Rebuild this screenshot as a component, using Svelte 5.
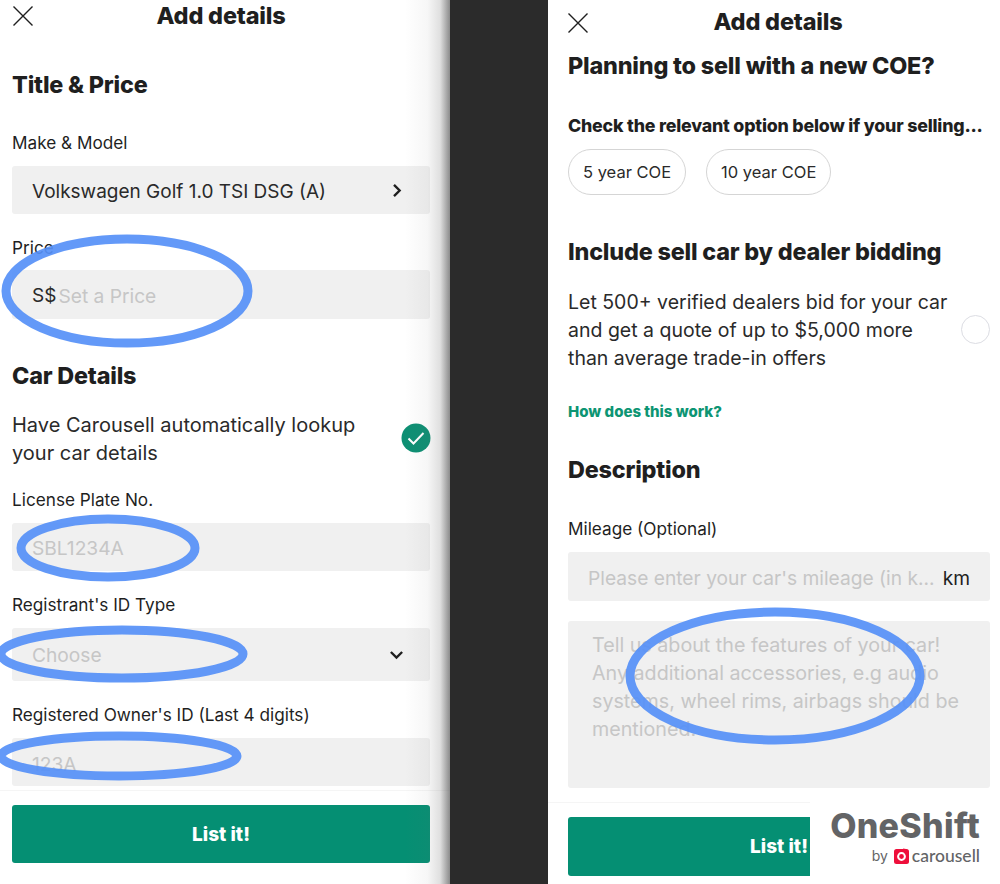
<script>
  const blue = '#5690f7';
</script>

<div class="page">
  <section class="panel left">
    <div class="body">
      <header class="bar">
        <svg class="close" viewBox="0 0 20 20" aria-hidden="true"><path d="M.5.5l19 19M19.5.5l-19 19" /></svg>
        <div class="title">Add details</div>
      </header>

      <h2 class="m36">Title &amp; Price</h2>
      <div class="label m31">Make &amp; Model</div>
      <div class="field m11">
        <span class="value">Volkswagen Golf 1.0 TSI DSG (A)</span>
        <svg class="chev" viewBox="0 0 12 12" aria-hidden="true"><path d="M4 1.5 8.5 6 4 10.5" /></svg>
      </div>

      <div class="label m22">Price</div>
      <div class="field m10 tall49">
        <span class="value">S$</span><span class="hint price">Set a Price</span>
      </div>

      <h2 class="m40">Car Details</h2>
      <div class="lookup m20">
        <p class="copy">Have Carousell automatically lookup<br />your car details</p>
        <svg class="check" viewBox="0 0 30 30" aria-hidden="true">
          <circle cx="15" cy="15" r="14.5" />
          <path d="M7.5 15.5 12.5 20.5 22.5 10" />
        </svg>
      </div>

      <div class="label m21">License Plate No.</div>
      <div class="field m11"><span class="hint">SBL1234A</span></div>

      <div class="label m22">Registrant's ID Type</div>
      <div class="field m11 tall53">
        <span class="hint">Choose</span>
        <svg class="chev" viewBox="0 0 12 12" aria-hidden="true"><path d="M1.5 4 6 8.5 10.5 4" /></svg>
      </div>

      <div class="label m22">Registered Owner's ID (Last 4 digits)</div>
      <div class="field m11"><span class="hint low">123A</span></div>
    </div>

    <footer class="foot"><button class="cta">List it!</button></footer>
    <div class="edge"></div>

    <svg class="marks" viewBox="0 0 450 884" aria-hidden="true">
      <ellipse cx="127" cy="291" rx="121" ry="52" stroke={blue} />
      <ellipse cx="108" cy="548" rx="87" ry="29" stroke={blue} />
      <ellipse cx="122" cy="654" rx="121" ry="24" stroke={blue} />
      <ellipse cx="119" cy="756" rx="118" ry="20" stroke={blue} />
    </svg>
  </section>

  <div class="gutter"></div>

  <section class="panel right">
    <div class="body">
      <header class="bar second">
        <svg class="close" viewBox="0 0 20 20" aria-hidden="true"><path d="M.5.5l19 19M19.5.5l-19 19" /></svg>
        <div class="title">Add details</div>
      </header>

      <h2 class="m11">Planning to sell with a new COE?</h2>
      <div class="strong m32">Check the relevant option below if your selling...</div>
      <div class="pills m12">
        <span class="pill">5 year COE</span>
        <span class="pill">10 year COE</span>
      </div>

      <h2 class="m40">Include sell car by dealer bidding</h2>
      <div class="lookup m20">
        <p class="copy">Let 500+ verified dealers bid for your car<br />and get a quote of up to $5,000 more<br />than average trade-in offers</p>
        <span class="radio"></span>
      </div>
      <div class="link m30">How does this work?</div>

      <h2 class="m32">Description</h2>
      <div class="label m32">Mileage (Optional)</div>
      <div class="field m11 tall49">
        <span class="hint clip">Please enter your car's mileage (in k...</span>
        <span class="unit">km</span>
      </div>
      <div class="area m20">Tell us about the features of your car!<br />Any additional accessories, e.g audio<br />systems, wheel rims, airbags should be<br />mentioned.</div>
    </div>

    <footer class="foot"><button class="cta">List it!</button></footer>

    <svg class="marks" viewBox="548 0 452 884" aria-hidden="true">
      <ellipse cx="775" cy="676" rx="145" ry="64" stroke={blue} />
    </svg>

    <div class="brand">
      <div class="one">OneShift</div>
      <div class="by">
        <span class="by-word">by</span>
        <svg class="mark" viewBox="0 0 15 16" aria-hidden="true">
          <rect y="1" width="15" height="15" rx="2.5" fill="#ee0f3b" />
          <path d="M9 0.5 12 1 10 3Z" fill="#ee0f3b" />
          <circle cx="7.5" cy="8.5" r="3.4" fill="none" stroke="#fff" stroke-width="2" />
        </svg>
        <span class="car">carousell</span>
      </div>
    </div>
  </section>
</div>

<style>
  :global(body) {
    margin: 0;
    background: #2b2b2b;
  }
  .page {
    display: flex;
    width: 1000px;
    height: 884px;
    overflow: hidden;
    font-family: Inter, "Liberation Sans", sans-serif;
    color: #1f1f1f;
  }
  .panel {
    position: relative;
    display: flex;
    flex-direction: column;
    background: #fff;
    overflow: hidden;
  }
  .left { width: 450px; }
  .right { width: 452px; }
  .gutter {
    width: 98px;
    background: #2b2b2b;
  }
  .body {
    flex: 1;
    min-height: 0;
  }
  .left .body { padding: 0 20px 0 12px; }
  .right .body { padding: 0 10px 0 20px; }

  .bar {
    position: relative;
    height: 32px;
    display: flex;
    align-items: center;
    justify-content: center;
  }
  .second {
    height: 38px;
    padding-top: 6px;
    box-sizing: border-box;
  }
  .right .title { margin-right: 2px; }
  .close {
    position: absolute;
    left: 1px;
    top: 6px;
    width: 20px;
    height: 20px;
    fill: none;
    stroke: #1f1f1f;
    stroke-width: 1.4;
  }
  .second .close {
    left: 0;
    top: 13px;
  }
  .title {
    font-size: 23.5px;
    font-weight: 800;
    line-height: 32px;
    letter-spacing: -0.2px;
  }
  h2 {
    margin: 0;
    font-size: 23.4px;
    line-height: 32px;
    font-weight: 800;
    letter-spacing: -0.2px;
    transform: translateY(1px);
  }
  .label {
    font-size: 17.2px;
    line-height: 24px;
  }
  .strong {
    font-size: 17.8px;
    line-height: 24px;
    font-weight: 800;
    white-space: nowrap;
    letter-spacing: -0.2px;
    transform: translateY(1px);
  }
  .link {
    font-size: 15px;
    line-height: 20px;
    font-weight: 800;
    color: #0d9573;
    transform: translateY(1px);
  }
  .field {
    display: flex;
    align-items: center;
    height: 48px;
    padding: 0 20px;
    background: #f0f0f0;
    border-radius: 3px;
    font-size: 19.2px;
  }
  .tall49 { height: 49px; }
  .tall53 { height: 53px; }
  .value {
    color: #2a2a2a;
    font-size: 19px;
    transform: translateY(1px);
  }
  .hint { color: #c6c6c6; transform: translateY(1px); }
  .tall53 .hint { transform: none; }
  .price { margin-left: 2px; }
  .low { transform: translateY(2px); }
  .clip {
    flex: 1;
    min-width: 0;
    white-space: nowrap;
  }
  .unit {
    margin-left: 4px;
    color: #1f1f1f;
    transform: translateY(1px);
  }
  .chev {
    width: 15px;
    height: 15px;
    margin-left: auto;
    margin-right: 6px;
    fill: none;
    stroke: #1f1f1f;
    stroke-width: 1.9;
  }
  .lookup {
    display: flex;
    align-items: center;
    justify-content: space-between;
  }
  .copy {
    margin: 0;
    font-size: 19.5px;
    line-height: 28px;
    color: #2a2a2a;
    transform: translateY(1px);
  }
  .left .copy {
    font-size: 20px;
    transform: none;
  }
  .check {
    width: 30px;
    height: 30px;
    flex: none;
    margin-top: -2px;
    margin-right: -1px;
  }
  .check circle { fill: #0d8f73; }
  .check path {
    fill: none;
    stroke: #fff;
    stroke-width: 2;
  }
  .radio {
    width: 27px;
    height: 27px;
    flex: none;
    border: 1.5px solid #dcdde3;
    border-radius: 50%;
  }
  .pills {
    display: flex;
    gap: 20px;
  }
  .pill {
    display: flex;
    align-items: center;
    height: 46px;
    box-sizing: border-box;
    padding: 0 14px;
    border: 1.5px solid #d5d5d5;
    border-radius: 23px;
    font-size: 16.5px;
    color: #2a2a2a;
  }
  .area {
    height: 167px;
    box-sizing: border-box;
    padding: 10px 24px;
    background: #f0f0f0;
    border-radius: 3px;
    font-size: 19.7px;
    line-height: 28px;
    color: #c6c6c6;
    white-space: nowrap;
  }
  .foot {
    flex: none;
    box-sizing: border-box;
    border-top: 1px solid #f5f5f5;
  }
  .left .foot {
    height: 94px;
    padding: 14px 20px 0 12px;
  }
  .right .foot {
    height: 82px;
    padding: 14px 10px 0 20px;
  }
  .cta {
    display: block;
    width: 100%;
    height: 58px;
    border: 0;
    border-radius: 3px;
    background: #058f73;
    color: #fff;
    font: 800 19px Inter, "Liberation Sans", sans-serif;
  }
  .right .cta { height: 59px; }
  .edge {
    position: absolute;
    top: 0;
    right: 0;
    bottom: 0;
    width: 45px;
    pointer-events: none;
    background: linear-gradient(to right, rgba(110, 110, 110, 0), rgba(110, 110, 110, 0.06) 50%, rgba(110, 110, 110, 0.22) 78%, rgba(90, 90, 90, 0.7) 100%);
  }
  .marks {
    position: absolute;
    inset: 0;
    width: 100%;
    height: 100%;
    fill: none;
    stroke-width: 9;
    pointer-events: none;
  }
  .marks ellipse { stroke-opacity: 0.92; }
  .brand {
    position: absolute;
    left: 262px;
    top: 792px;
    right: 0;
    bottom: 0;
    box-sizing: border-box;
    padding: 14px 20px 0 0;
    background: #fff;
    text-align: right;
    color: #636466;
  }
  .one {
    font-size: 34px;
    line-height: 40px;
    font-weight: 800;
    letter-spacing: 0.3px;
  }
  .by {
    display: flex;
    align-items: center;
    justify-content: flex-end;
    gap: 6px;
    margin-top: 1px;
  }
  .by-word {
    font-size: 14px;
    line-height: 18px;
  }
  .mark {
    width: 15px;
    height: 16px;
    margin-right: -3px;
  }
  .car {
    font: 500 17.5px Lato, sans-serif;
    line-height: 18px;
  }

  .m10 { margin-top: 10px; }
  .m11 { margin-top: 11px; }
  .m12 { margin-top: 12px; }
  .m20 { margin-top: 20px; }
  .m21 { margin-top: 21px; }
  .m22 { margin-top: 22px; }
  .m30 { margin-top: 30px; }
  .m31 { margin-top: 31px; }
  .m32 { margin-top: 32px; }
  .m36 { margin-top: 36px; }
  .m40 { margin-top: 40px; }
</style>
